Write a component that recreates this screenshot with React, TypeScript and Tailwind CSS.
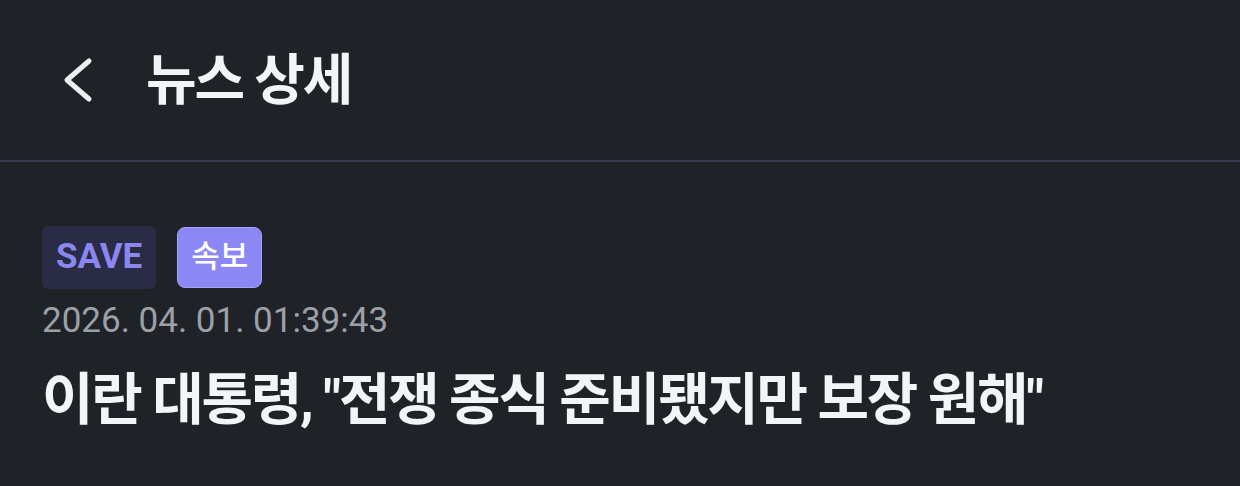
const KR = { fontFamily: 'Roboto, "Noto Sans CJK KR", sans-serif' };

function BackIcon() {
  return (
    <svg width="34" height="50" viewBox="0 0 34 50" fill="none" aria-hidden="true">
      <path d="M27 6 L5 25 L27 44" stroke="currentColor" strokeWidth="5" strokeLinecap="round" strokeLinejoin="round" />
    </svg>
  );
}

export default function App() {
  return (
    <div className="min-h-screen w-full bg-[#1f2227] text-[#f3f4f6]" style={KR}>
      <header className="flex h-[162px] items-center border-b-2 border-[#383a4f] pl-[62px]">
        <button className="flex items-center text-[#eceef2]">
          <BackIcon />
        </button>
        <h1 className="ml-[50px] text-[55px] font-bold tracking-[-0.04em]">뉴스 상세</h1>
      </header>

      <main className="px-[42px] pt-[64px]">
        <div className="flex items-center gap-[21px]">
          <span className="flex h-[63px] items-center rounded-[6px] bg-[#2a2b45] px-[14px] text-[35px] font-bold text-[#8b87f0]">
            SAVE
          </span>
          <span className="flex h-[61px] items-center rounded-[8px] border border-[#a6a2ff] bg-[#8b87f5] px-[13px] text-[31px] font-medium text-white">
            속보
          </span>
        </div>
        <p className="mt-[10px] text-[35px] leading-[44px] text-[#9ca0a8]">2026. 04. 01. 01:39:43</p>
        <h2 className="mt-[25px] text-[56px] font-bold leading-[64px] tracking-[-0.04em]">
          이란 대통령, "전쟁 종식 준비됐지만 보장 원해"
        </h2>
      </main>
    </div>
  );
}
